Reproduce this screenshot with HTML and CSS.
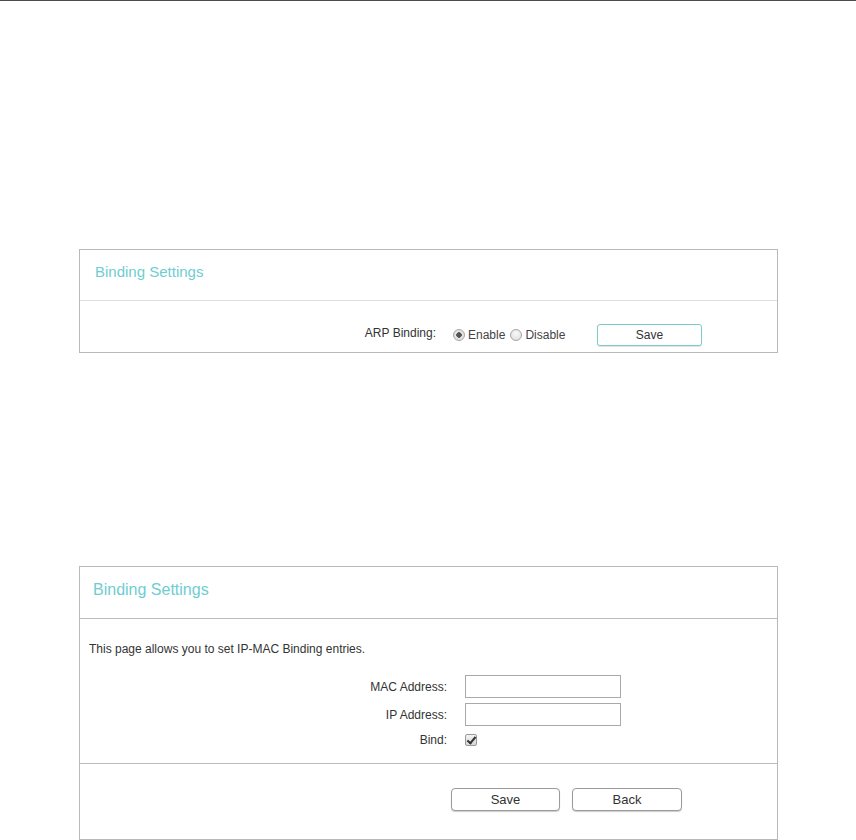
FILE: index.html
```html
<!DOCTYPE html>
<html>
<head>
<meta charset="utf-8">
<link rel="stylesheet" href="styles.css">
</head>
<body>
<div class="topline"></div>
<div class="panel panel-arp">
  <div class="panel-head head-a"><span class="title t-a">Binding Settings</span></div>
  <div class="panel-body arp-body">
    <div class="arp-row">
      <label class="lbl">ARP Binding:</label>
      <div class="radios">
        <input type="radio" name="arp" class="radio" checked><span class="rtext">Enable</span>
        <input type="radio" name="arp" class="radio"><span class="rtext">Disable</span>
      </div>
      <button class="btn btn-teal">Save</button>
    </div>
  </div>
</div>

<div class="panel panel-mac">
  <div class="panel-head head-b"><span class="title t-b">Binding Settings</span></div>
  <div class="panel-body mac-body">
    <p class="desc">This page allows you to set IP-MAC Binding entries.</p>
    <div class="form">
      <label class="flbl">MAC Address:</label><input type="text" class="field">
      <label class="flbl">IP Address:</label><input type="text" class="field">
      <label class="flbl bindrow">Bind:</label><span class="fcell bindrow"><input type="checkbox" class="check" checked></span>
    </div>
  </div>
  <div class="panel-foot">
    <button class="btn btn-grey btn-save">Save</button>
    <button class="btn btn-grey btn-back">Back</button>
  </div>
</div>
</body>
</html>
```

FILE: styles.css
```css
html, body {
  margin: 0;
  padding: 0;
  background: #fff;
}
body {
  font-family: "Liberation Sans", Arial, sans-serif;
  font-size: 12px;
  color: #333;
}
.topline {
  height: 1px;
  background: #4a4c54;
}
.panel {
  margin-left: 79px;
  width: 697px;
  border: 1px solid #b9b9b9;
}
.panel-arp {
  margin-top: 248px;
}
.panel-mac {
  margin-top: 213px;
  border-bottom: 1px solid #b9b9b9;
}
.panel-head {
  display: flex;
  align-items: center;
}
.head-a {
  height: 50px;
  border-bottom: 1px solid #dedede;
}
.head-b {
  height: 51px;
  border-bottom: 1px solid #bbbbbb;
}
.title {
  color: #6fcdd1;
  line-height: 18px;
}
.t-a {
  font-size: 15px;
  padding-left: 15px;
  margin-top: -6px;
}
.t-b {
  font-size: 16px;
  padding-left: 13px;
  margin-top: -6px;
}
.arp-body {
  height: 51px;
}
.arp-row {
  display: grid;
  grid-template-columns: 356px 144px 105px;
  column-gap: 17px;
  align-items: center;
  padding-top: 23px;
}
.arp-row .btn {
  margin-left: -17px;
}
.lbl {
  text-align: right;
  line-height: 14px;
  margin-top: -4px;
}
.radios {
  display: flex;
  align-items: center;
  margin-top: -1px;
}
.radio {
  appearance: none;
  -webkit-appearance: none;
  width: 12px;
  height: 12px;
  margin: 0 3px 0 0;
  border-radius: 50%;
  border: 1px solid #a5a5a5;
  background: radial-gradient(circle at 50% 35%, #f8f8f8 0%, #dcdcdc 100%);
  box-sizing: border-box;
  position: relative;
}
.radio:checked {
  background: radial-gradient(circle, #555 0 2.5px, #e8e8e8 3px, #d8d8d8 100%);
}
.rtext {
  margin-right: 5px;
  color: #444;
}
.btn {
  font-family: "Liberation Sans", Arial, sans-serif;
  font-size: 12px;
  color: #333;
  background: #fff;
  padding: 0;
  cursor: pointer;
}
.btn-teal {
  width: 105px;
  height: 22px;
  border: 1px solid #7ccccc;
  border-radius: 3px;
  box-shadow: 0 1px 1px rgba(0,0,0,0.12);
}
.mac-body {
  height: 144px;
  border-bottom: 1px solid #bbbbbb;
}
.desc {
  margin: 0;
  padding: 23px 0 0 9px;
  line-height: 14px;
  color: #333;
}
.form {
  display: grid;
  grid-template-columns: 367px 156px;
  column-gap: 18px;
  row-gap: 5px;
  align-items: center;
  margin-top: 19px;
}
.flbl {
  text-align: right;
  line-height: 14px;
}
.bindrow {
  margin-top: 2px;
}
.field {
  box-sizing: border-box;
  width: 156px;
  height: 23px;
  margin: 0;
  border: 1px solid #a9a9a9;
  padding: 0 4px;
  font-family: "Liberation Sans", Arial, sans-serif;
  font-size: 12px;
}
.fcell {
  display: flex;
  height: 14px;
  align-items: center;
}
.check {
  appearance: none;
  -webkit-appearance: none;
  box-sizing: border-box;
  width: 12px;
  height: 12px;
  margin: 0;
  border: 1px solid #9a9a9a;
  border-radius: 2px;
  background: linear-gradient(#f4f4f4, #d6d6d6);
  position: relative;
}
.check:checked::after {
  content: "";
  position: absolute;
  left: 3px;
  top: 0px;
  width: 3px;
  height: 7px;
  border: solid #333;
  border-width: 0 2px 2px 0;
  transform: rotate(40deg);
}
.panel-foot {
  height: 75px;
  display: flex;
  align-items: flex-start;
  padding-top: 24px;
  box-sizing: border-box;
}
.btn-grey {
  height: 23px;
  border: 1px solid #9b9b9b;
  border-radius: 4px;
  box-shadow: 0 1px 1px rgba(0,0,0,0.2);
  font-size: 13px;
}
.btn-save {
  width: 109px;
  margin-left: 371px;
}
.btn-back {
  width: 110px;
  margin-left: 12px;
}
```
